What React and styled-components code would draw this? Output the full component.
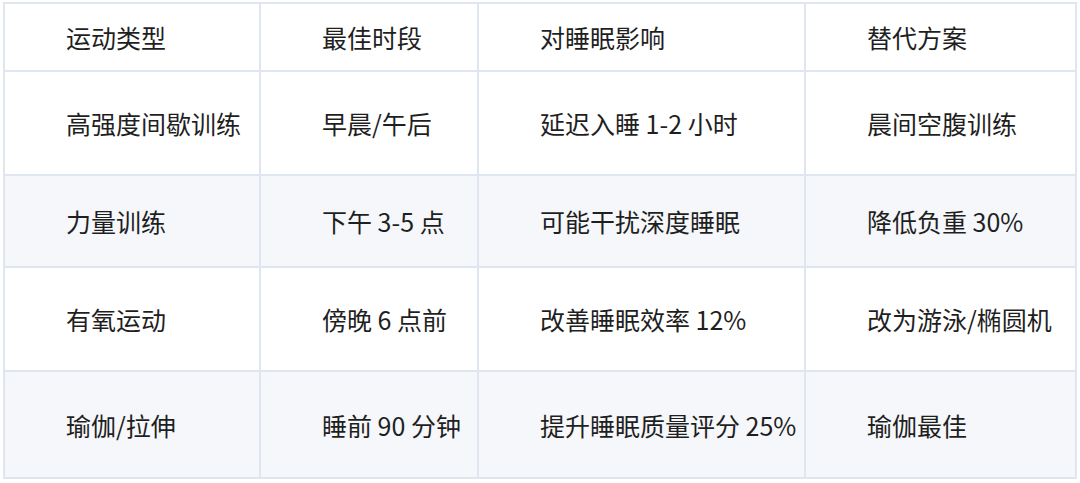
import React from 'react';
import styled, { createGlobalStyle } from 'styled-components';

const GlobalStyle = createGlobalStyle`
    html, body {
        margin: 0;
        padding: 0;
        background: #ffffff;
    }
    body {
        font-family: "Noto Sans CJK SC", "Noto Sans", sans-serif;
    }
`;

const Page = styled.div`
    width: 1080px;
    height: 483px;
    padding: 2px 5px 0 3px;
    box-sizing: border-box;
    background: #ffffff;
`;

const Table = styled.table`
    width: 1072px;
    border-collapse: collapse;
    table-layout: fixed;
    border: 2px solid #dfe6ef;
    color: #1f1f1f;
    font-size: 25px;
`;

const Row = styled.tr`
    height: ${p => p.$h}px;
    background: ${p => (p.$striped ? '#f5f7fa' : '#ffffff')};
`;

const Cell = styled.td`
    border: 2px solid #dfe6ef;
    padding: 0 0 0 61px;
    vertical-align: middle;
    white-space: nowrap;
    line-height: 1.2;
`;

const HeadCell = styled(Cell).attrs({ as: 'th' })`
    font-weight: 400;
    text-align: left;
`;

const columns = [256, 218, 327, 271];

const header = ['运动类型', '最佳时段', '对睡眠影响', '替代方案'];

const rows = [
    { h: 104, cells: ['高强度间歇训练', '早晨/午后', '延迟入睡 1-2 小时', '晨间空腹训练'] },
    { h: 92, cells: ['力量训练', '下午 3-5 点', '可能干扰深度睡眠', '降低负重 30%'] },
    { h: 104, cells: ['有氧运动', '傍晚 6 点前', '改善睡眠效率 12%', '改为游泳/椭圆机'] },
    { h: 107, cells: ['瑜伽/拉伸', '睡前 90 分钟', '提升睡眠质量评分 25%', '瑜伽最佳'] },
];

const App = () => {
    return (
        <Page>
            <GlobalStyle />
            <Table>
                <colgroup>
                    {columns.map((w, i) => <col key={i} style={{ width: w }} />)}
                </colgroup>
                <thead>
                    <Row $h={68}>
                        {header.map(text => <HeadCell key={text}>{text}</HeadCell>)}
                    </Row>
                </thead>
                <tbody>
                    {rows.map((row, i) => (
                        <Row key={i} $h={row.h} $striped={i % 2 === 1}>
                            {row.cells.map((text, j) => <Cell key={j}>{text}</Cell>)}
                        </Row>
                    ))}
                </tbody>
            </Table>
        </Page>
    );
};

export default App;
